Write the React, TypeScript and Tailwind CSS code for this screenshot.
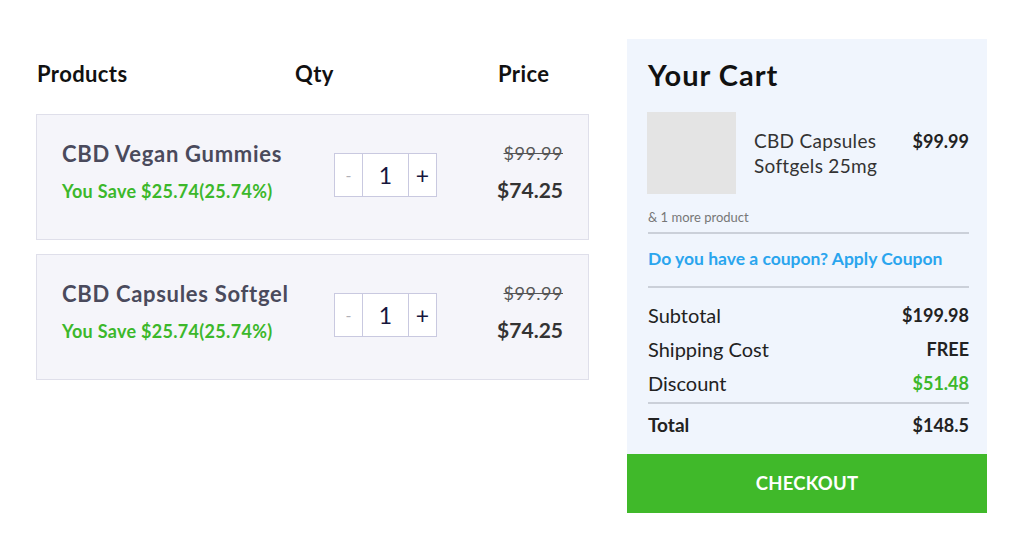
import React from "react";

const font = { fontFamily: "Lato, 'Open Sans', sans-serif" };

function ProductCard({ name }: { name: string }) {
  return (
    <div className="flex h-[126px] items-start border border-[#dfdfea] bg-[#f5f5fa] pl-[25px] pr-[25px]">
      <div className="flex-1 pt-[26px]">
        <div className="text-[22px] font-bold leading-[26px] tracking-[0.7px] text-[#4a4a5c]">{name}</div>
        <div className="mt-[13px] text-[18px] font-bold leading-[22px] tracking-[0.3px] text-[#3cb82b]">
          You Save $25.74(25.74%)
        </div>
      </div>
      <div className="mt-[38px] flex h-[44px] border border-[#c9c9e0] bg-white">
        <div className="flex w-[27px] items-center justify-center text-[16px] text-[#b0b0b8]">-</div>
        <div className="flex w-[47px] items-center justify-center border-l border-r border-[#c9c9e0] text-[23px] text-[#16163d]">
          1
        </div>
        <div className="flex w-[27px] items-center justify-center text-[23px] text-[#16163d]">+</div>
      </div>
      <div className="ml-[25px] flex w-[101px] flex-col items-end pt-[27px]">
        <div className="text-[18px] leading-[22px] tracking-[0.5px] text-[#555] line-through decoration-[#555]">$99.99</div>
        <div className="mt-[13px] text-[21px] font-bold leading-[26px] text-[#333]">$74.25</div>
      </div>
    </div>
  );
}

export default function App() {
  return (
    <div style={font} className="flex h-[549px] w-[1024px] bg-white pl-[36px] pt-[39px]">
      <div className="w-[553px] pt-[21px]">
        <div className="flex h-[26px] items-center text-[22px] font-bold tracking-[0.4px] text-[#111]">
          <div className="w-[259px] pl-[1px]">Products</div>
          <div className="w-[203px]">Qty</div>
          <div>Price</div>
        </div>
        <div className="mt-[28px] flex flex-col gap-[14px]">
          <ProductCard name="CBD Vegan Gummies" />
          <ProductCard name="CBD Capsules Softgel" />
        </div>
      </div>
      <div className="ml-[38px] w-[360px]">
        <div className="h-[415px] bg-[#f0f5fd] pl-[21px] pr-[18px] pt-[18px]">
          <div className="text-[29px] font-bold leading-[36px] tracking-[1px] text-[#111]">Your Cart</div>
          <div className="mt-[19px] flex">
            <div className="ml-[-1px] h-[82px] w-[89px] bg-[#e4e4e4]" />
            <div className="ml-[18px] flex-1 pt-[16px] text-[19px] leading-[25px] tracking-[0.3px] text-[#333]">
              <div>CBD Capsules</div>
              <div>Softgels 25mg</div>
            </div>
            <div className="pt-[17px] text-[18px] font-bold leading-[24px] text-[#222]">$99.99</div>
          </div>
          <div className="mt-[14px] text-[13px] leading-[18px] text-[#777]">&amp; 1 more product</div>
          <div className="mt-[6px] h-[2px] bg-[#cbd0d9]" />
          <div className="mt-[14px] text-[17.5px] font-bold leading-[22px] text-[#2aa5ee]">
            Do you have a coupon? Apply Coupon
          </div>
          <div className="mt-[16px] h-[2px] bg-[#cbd0d9]" />
          <div className="mt-[14px] flex flex-col gap-[8px] text-[20px] leading-[26px] text-[#222]">
            <div className="flex justify-between">
              <span>Subtotal</span>
              <span className="text-[18px] font-bold">$199.98</span>
            </div>
            <div className="flex justify-between">
              <span>Shipping Cost</span>
              <span className="text-[18px] font-bold">FREE</span>
            </div>
            <div className="flex justify-between">
              <span>Discount</span>
              <span className="text-[18px] font-bold text-[#3cb82b]">$51.48</span>
            </div>
          </div>
          <div className="mt-[6px] h-[2px] bg-[#cbd0d9]" />
          <div className="mt-[9px] flex justify-between text-[19px] font-bold leading-[24px] text-[#222]">
            <span>Total</span>
            <span className="text-[18px]">$148.5</span>
          </div>
        </div>
        <div className="flex h-[59px] items-center justify-center bg-[#40b92a] text-[18.5px] font-bold tracking-[0.2px] text-white">
          CHECKOUT
        </div>
      </div>
    </div>
  );
}
